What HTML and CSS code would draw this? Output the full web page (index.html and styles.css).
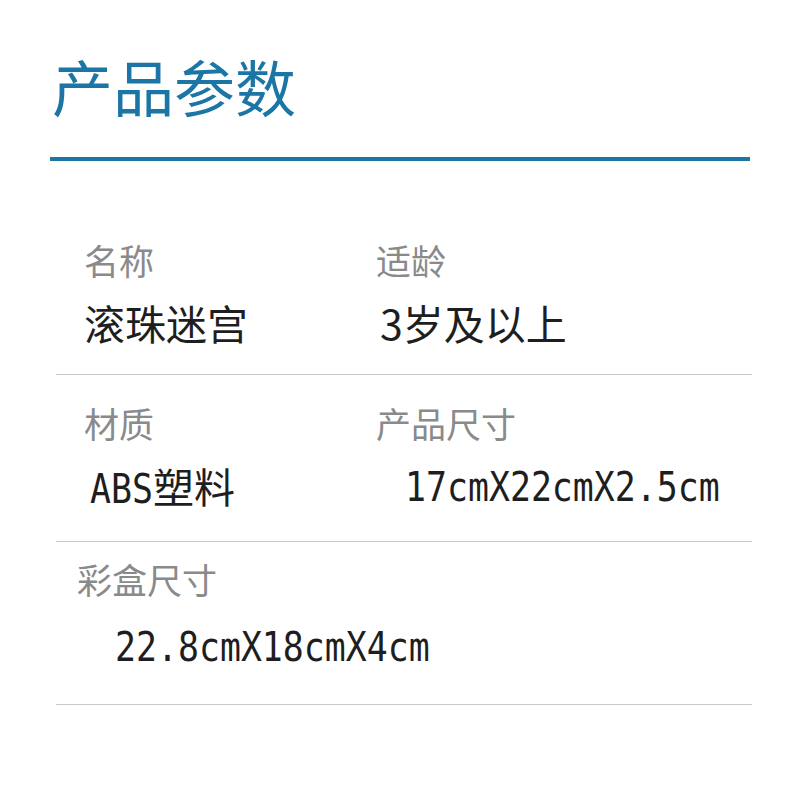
FILE: index.html
```html
<!DOCTYPE html>
<html lang="zh">
<head>
<meta charset="utf-8">
<link rel="stylesheet" href="styles.css">
</head>
<body>
<div class="page">
  <h1 class="title">产品参数</h1>
  <div class="rule"></div>
  <div class="specs">
    <div class="row row-1">
      <div class="cell">
        <div class="label">名称</div>
        <div class="value">滚珠迷宫</div>
      </div>
      <div class="cell">
        <div class="label">适龄</div>
        <div class="value v-age">3岁及以上</div>
      </div>
    </div>
    <div class="row row-2">
      <div class="cell">
        <div class="label">材质</div>
        <div class="value v-mat"><span class="mono">ABS</span>塑料</div>
      </div>
      <div class="cell">
        <div class="label">产品尺寸</div>
        <div class="value v-size"><span class="mono">17cmX22cmX2.5cm</span></div>
      </div>
    </div>
    <div class="row row-3">
      <div class="cell">
        <div class="label l-box">彩盒尺寸</div>
        <div class="value v-box"><span class="mono">22.8cmX18cmX4cm</span></div>
      </div>
    </div>
  </div>
</div>
</body>
</html>
```

FILE: styles.css
```css
* { box-sizing: border-box; }
html, body { margin: 0; padding: 0; background: #ffffff; }
body {
  font-family: "Noto Sans CJK SC", "Noto Sans", sans-serif;
  width: 800px;
  height: 796px;
  overflow: hidden;
}
.page {
  padding: 49px 50px 0 50px;
}
.title {
  margin: 0 0 0 2px;
  font-size: 61px;
  line-height: 74px;
  font-weight: 400;
  color: #1b76a5;
}
.rule {
  margin-top: 34px;
  height: 4px;
  background: #1b76a5;
  width: 700px;
}
.specs {
  margin-left: 6px;
  width: 696px;
}
.row {
  display: flex;
  border-bottom: 1px solid #c9c9c9;
}
.row-1 { padding-top: 77px; height: 214px; }
.row-2 { padding-top: 26px; height: 167px; }
.row-3 { padding-top: 15px; height: 163px; }
.cell {
  display: flex;
  flex-direction: column;
  flex-shrink: 0;
  min-width: 0;
}
.cell:first-child { width: 320px; padding-left: 28px; }
.cell:nth-child(2) { flex: 1 1 0; white-space: nowrap; }
.label {
  font-size: 35px;
  line-height: 44px;
  color: #8a8a8a;
  white-space: nowrap;
}
.value {
  margin-top: 15px;
  font-size: 41px;
  line-height: 50px;
  color: #1e1e1e;
  white-space: nowrap;
}
.v-age { padding-left: 4px; }
.v-mat { padding-left: 6px; }
.v-size { padding-left: 29px; margin-top: 13px; }
.l-box { margin-left: -7px; }
.v-box { padding-left: 31px; margin-top: 17px; }
.mono {
  display: inline-block;
  font-family: "DejaVu Sans Mono", monospace;
  font-size: 41px;
  transform: scaleX(0.85);
  transform-origin: left center;
}
.v-mat .mono { margin-right: -11px; }
```
